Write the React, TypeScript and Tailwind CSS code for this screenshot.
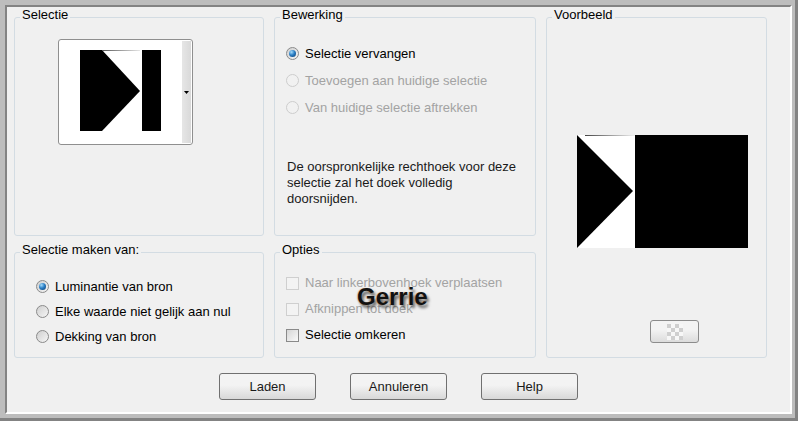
import type { ReactNode } from "react";

function Radio({ checked = false, disabled = false }: { checked?: boolean; disabled?: boolean }) {
  return (
    <span
      className={`w-[13px] h-[13px] rounded-full border flex items-center justify-center shrink-0 ${
        disabled
          ? "border-[#cdcdcd] bg-[#f1f1f1]"
          : "border-[#8a8a8a] bg-linear-to-br from-[#cfcfcf] to-[#f6f6f6]"
      }`}
    >
      {checked && (
        <span className="w-[7px] h-[7px] rounded-full bg-[radial-gradient(circle_at_35%_30%,#a6dcfa_0%,#2b7fc6_45%,#0b3a6b_100%)]" />
      )}
    </span>
  );
}

function Check({ disabled = false }: { disabled?: boolean }) {
  return (
    <span
      className={`w-[13px] h-[13px] border shrink-0 ${
        disabled
          ? "border-[#cfcfcf] bg-[#f3f3f3]"
          : "border-[#8a8a8a] bg-linear-to-br from-[#d6d6d6] to-[#fafafa]"
      }`}
    />
  );
}

function Group({ title, children, className = "" }: { title: string; children: ReactNode; className?: string }) {
  return (
    <fieldset className={`min-w-0 h-full border border-[#d3dce3] rounded-[3px] ${className}`}>
      <legend className="ml-[5px] px-[2px] pb-[5px] leading-[15px] text-black">{title}</legend>
      {children}
    </fieldset>
  );
}

function Row({ children, h, disabled = false }: { children: ReactNode; h: string; disabled?: boolean }) {
  return (
    <div className={`flex items-center gap-[6px] whitespace-nowrap ${h} ${disabled ? "text-[#a3a3a3]" : "text-black"}`}>
      {children}
    </div>
  );
}

export default function App() {
  return (
    <div className="relative w-[798px] h-[421px] flex flex-col bg-[#bdbdbd] border-r-[3px] border-b-[3px] border-[#838383] pt-[5px] pl-[5px] pr-[3px] pb-[4px] font-['Liberation_Sans',Arial,sans-serif] text-[13px]">
      <div className="flex-1 flex flex-col bg-[#f0f0f0] border-t-2 border-l-2 border-t-[#838383] border-l-[#838383] border-r-2 border-b-2 border-r-white border-b-white pl-[7px]">
        <div className="grid grid-cols-[250px_262px_221px] grid-rows-[229px_116px] gap-x-[10px] gap-y-[6px]">
          <Group title="Selectie">
            <div className="mt-[12px] ml-[43px] w-[135px] h-[106px] flex bg-white border border-[#8f8f8f] rounded-[3px] overflow-hidden">
              <svg width="123" height="104" viewBox="0 0 123 104">
                <defs>
                  <linearGradient id="sl" x1="0" x2="1">
                    <stop offset="0" stopColor="#555" />
                    <stop offset="1" stopColor="#e6e6e6" />
                  </linearGradient>
                </defs>
                <polygon points="21,10 43,10 81,51 43,91 21,91" fill="#000" />
                <rect x="83" y="10" width="19" height="81" fill="#000" />
                <rect x="43" y="10" width="38" height="1" fill="url(#sl)" />
              </svg>
              <div className="w-[9px] my-[1px] flex items-center justify-center bg-linear-to-r from-[#e6e6e6] to-[#d9d9d9]">
                <svg width="5" height="3" viewBox="0 0 5 3">
                  <polygon points="0,0 5,0 2.5,3" fill="#000" />
                </svg>
              </div>
            </div>
          </Group>

          <Group title="Bewerking">
            <div className="mt-[13px] pl-[11px]">
              <Row h="h-[27px]">
                <Radio checked />
                <span>Selectie vervangen</span>
              </Row>
              <Row h="h-[27px]" disabled>
                <Radio disabled />
                <span>Toevoegen aan huidige selectie</span>
              </Row>
              <Row h="h-[27px]" disabled>
                <Radio disabled />
                <span>Van huidige selectie aftrekken</span>
              </Row>
            </div>
            <p className="mt-[38px] ml-[12px] leading-[16px] text-[#1a1a1a] whitespace-nowrap">
              De oorspronkelijke rechthoek voor deze
              <br />
              selectie zal het doek volledig
              <br />
              doorsnijden.
            </p>
          </Group>

          <Group title="Voorbeeld" className="row-span-2">
            <div className="mt-[108px] ml-[30px]">
              <svg width="171" height="113" viewBox="0 0 171 113" className="block">
                <defs>
                  <linearGradient id="pl" x1="0" x2="1">
                    <stop offset="0" stopColor="#444" />
                    <stop offset="1" stopColor="#f0f0f0" />
                  </linearGradient>
                </defs>
                <rect x="0" y="0" width="58" height="113" fill="#fff" />
                <rect x="58" y="0" width="113" height="113" fill="#000" />
                <polygon points="0,0 56,56 0,113" fill="#000" />
                <rect x="8" y="0" width="50" height="1" fill="url(#pl)" />
              </svg>
            </div>
            <button className="mt-[72px] ml-[103px] w-[49px] h-[23px] flex items-center justify-center rounded-[3px] border border-[#8c8c8c] bg-linear-to-b from-[#f4f4f4] from-40% to-[#dcdcdc]">
              <svg width="16" height="16" viewBox="0 0 16 16">
                {[0, 1, 2, 3].map((r) =>
                  [0, 1, 2, 3].map((c) => (
                    <rect
                      key={`${r}-${c}`}
                      x={c * 4}
                      y={r * 4}
                      width="4"
                      height="4"
                      fill={(r + c) % 2 === 0 ? "#cfcfcf" : "#f7f7f7"}
                    />
                  ))
                )}
              </svg>
            </button>
          </Group>

          <Group title="Selectie maken van:">
            <div className="mt-[12px] pl-[21px]">
              <Row h="h-[25px]">
                <Radio checked />
                <span>Luminantie van bron</span>
              </Row>
              <Row h="h-[25px]">
                <Radio />
                <span>Elke waarde niet gelijk aan nul</span>
              </Row>
              <Row h="h-[25px]">
                <Radio />
                <span>Dekking van bron</span>
              </Row>
            </div>
          </Group>

          <Group title="Opties">
            <div className="mt-[8px] pl-[11px]">
              <Row h="h-[26px]" disabled>
                <Check disabled />
                <span>Naar linkerbovenhoek verplaatsen</span>
              </Row>
              <Row h="h-[26px]" disabled>
                <Check disabled />
                <span>Afknippen tot doek</span>
              </Row>
              <Row h="h-[26px]">
                <Check />
                <span>Selectie omkeren</span>
              </Row>
            </div>
          </Group>
        </div>

        <div className="mt-[15px] flex justify-center gap-[34px] pr-[7px]">
          {["Laden", "Annuleren", "Help"].map((label) => (
            <button
              key={label}
              className="w-[97px] h-[27px] rounded-[3px] border border-[#707070] bg-linear-to-b from-[#f3f3f3] from-45% to-[#d8d8d8] text-[13px] text-[#1a1a1a]"
            >
              {label}
            </button>
          ))}
        </div>
      </div>

      <span className="absolute left-[357px] top-[285px] text-[24px] leading-[24px] font-bold text-[#111] [text-shadow:-1px_0_1px_rgba(190,120,40,0.45),2px_3px_3px_rgba(0,0,0,0.6)]">
        Gerrie
      </span>
    </div>
  );
}
